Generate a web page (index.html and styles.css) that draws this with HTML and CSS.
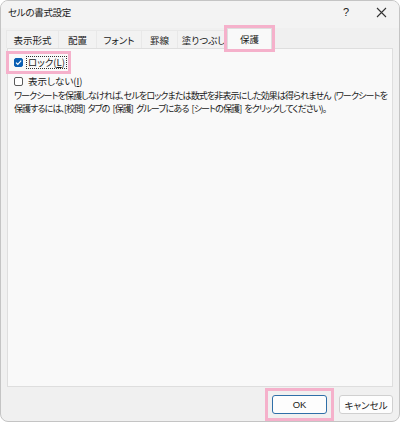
FILE: index.html
```html
<!DOCTYPE html>
<html lang="ja">
<head>
<meta charset="utf-8">
<title>セルの書式設定</title>
<link rel="stylesheet" href="styles.css">
</head>
<body>
<div class="window">
  <div class="titlebar">
    <span class="title">セルの書式設定</span>
    <span class="ctrl help">?</span>
    <span class="ctrl close">
      <svg width="11" height="11" viewBox="0 0 11 11"><path d="M1 1L10 10M10 1L1 10" stroke="#333" stroke-width="1.1" fill="none"/></svg>
    </span>
  </div>
  <div class="tabs">
    <div class="tab">表示形式</div>
    <div class="tab">配置</div>
    <div class="tab">フォント</div>
    <div class="tab">罫線</div>
    <div class="tab">塗りつぶし</div>
    <div class="tab active mark">保護</div>
  </div>
  <div class="panel">
    <label class="check mark">
      <span class="box checked">
        <svg width="9" height="9" viewBox="0 0 9 9"><path d="M2 4.6L3.8 6.3L7.2 2.6" stroke="#fff" stroke-width="1.2" fill="none"/></svg>
      </span>
      <span class="focus">ロック(<u>L</u>)</span>
    </label>
    <label class="check">
      <span class="box"></span>
      <span class="lbl">表示しない(<u>I</u>)</span>
    </label>
    <p class="note">ワークシートを保護しなければ、セルをロックまたは数式を非表示にした効果は得られません (ワークシートを<br>保護するには、[校閲] タブの [保護] グループにある [シートの保護] をクリックしてください)。</p>
  </div>
  <div class="footer">
    <div class="okwrap mark"><button class="btn default">OK</button></div>
    <button class="btn">キャンセル</button>
  </div>
</div>
</body>
</html>
```
FILE: styles.css
```css
* { box-sizing: border-box; }
html, body { margin: 0; padding: 0; background: #ffffff; }
body {
  font-family: "Noto Sans CJK JP", "Noto Sans", sans-serif;
  font-size: 9.5px;
  color: #1a1a1a;
  font-feature-settings: "palt";
}
.window {
  width: 400px;
  height: 422px;
  background: #f0f0f0;
  border: 1px solid #c4c4c4;
  border-radius: 8px;
  display: flex;
  flex-direction: column;
  overflow: hidden;
}
.titlebar {
  height: 27px;
  display: flex;
  align-items: center;
  padding: 0 0 5px 7px;
  background: #f3f3f3;
}
.title { flex: 1; font-size: 9.5px; letter-spacing: -0.3px; }
.ctrl {
  width: 34px;
  display: flex;
  justify-content: center;
  align-items: center;
}
.help { font-family: "Liberation Sans", sans-serif; font-size: 11px; }
.close { width: 36px; }
.tabs {
  height: 20px;
  display: flex;
  align-items: flex-end;
  padding-left: 5px;
  position: relative;
  z-index: 1;
}
.tab {
  height: 18px;
  padding: 0;
  white-space: nowrap;
  display: flex;
  align-items: center;
  justify-content: center;
  border: 1px solid #e8e8e8;
  border-bottom: none;
  margin-right: -1px;
  background: #f2f2f2;
}
.tab:nth-child(1) { width: 53px; }
.tab:nth-child(2) { width: 39px; }
.tab:nth-child(3) { width: 46px; }
.tab:nth-child(4) { width: 37px; }
.tab:nth-child(5) { width: 53px; }
.tab.active {
  width: 45px;
  background: #f9f9f9;
  border-color: #dedede;
  margin-bottom: -1px;
  margin-left: -2px;
  height: 21px;
  padding-bottom: 1px;
}
.mark { outline: 3px solid #f5b1cb; }
.tab.mark { outline-offset: 0; }
.panel {
  flex: 1;
  margin: 0 6px;
  background: #f9f9f9;
  border: 1px solid #dedede;
  padding: 6px 6px 0 6px;
}
.check {
  display: flex;
  align-items: center;
  height: 14px;
  gap: 3px;
}
.check.mark {
  width: 57px;
  margin-left: -4px;
  padding-left: 4px;
  height: 15px;
  outline-offset: 1px;
}
.check + .check { margin-top: 4px; }
.box {
  width: 9px;
  height: 9px;
  border: 1px solid #5a5a5a;
  border-radius: 2px;
  background: #ffffff;
  display: inline-flex;
  flex-shrink: 0;
}
.box.checked {
  background: #0a5fb4;
  border-color: #0a5fb4;
  align-items: center;
  justify-content: center;
}
.box.checked svg { margin: -1px; }
.focus {
  border: 1px dotted #333;
  padding: 0 1px;
  line-height: 11px;
}
.lbl { padding-left: 2px; }
.note {
  margin: 1px 0 0 0;
  font-size: 9px;
  line-height: 13px;
  white-space: nowrap;
  letter-spacing: -0.9px;
  word-spacing: 2px;
}
.footer {
  height: 34px;
  display: flex;
  justify-content: flex-end;
  align-items: center;
  gap: 10px;
  padding: 1px 6px 0 0;
}
.okwrap { display: flex; outline-offset: 4px; margin-right: 2px; }
.btn {
  height: 19px;
  padding: 0;
  font-family: "Noto Sans CJK JP", "Noto Sans", sans-serif;
  font-size: 9.5px;
  color: #1a1a1a;
  background: #fdfdfd;
  border: 1px solid #d0d0d0;
  border-radius: 3px;
  width: 54px;
  font-feature-settings: "palt";
}
.btn.default { width: 55px; border-color: #2f6fa8; font-family: "Liberation Sans", sans-serif; }
```
